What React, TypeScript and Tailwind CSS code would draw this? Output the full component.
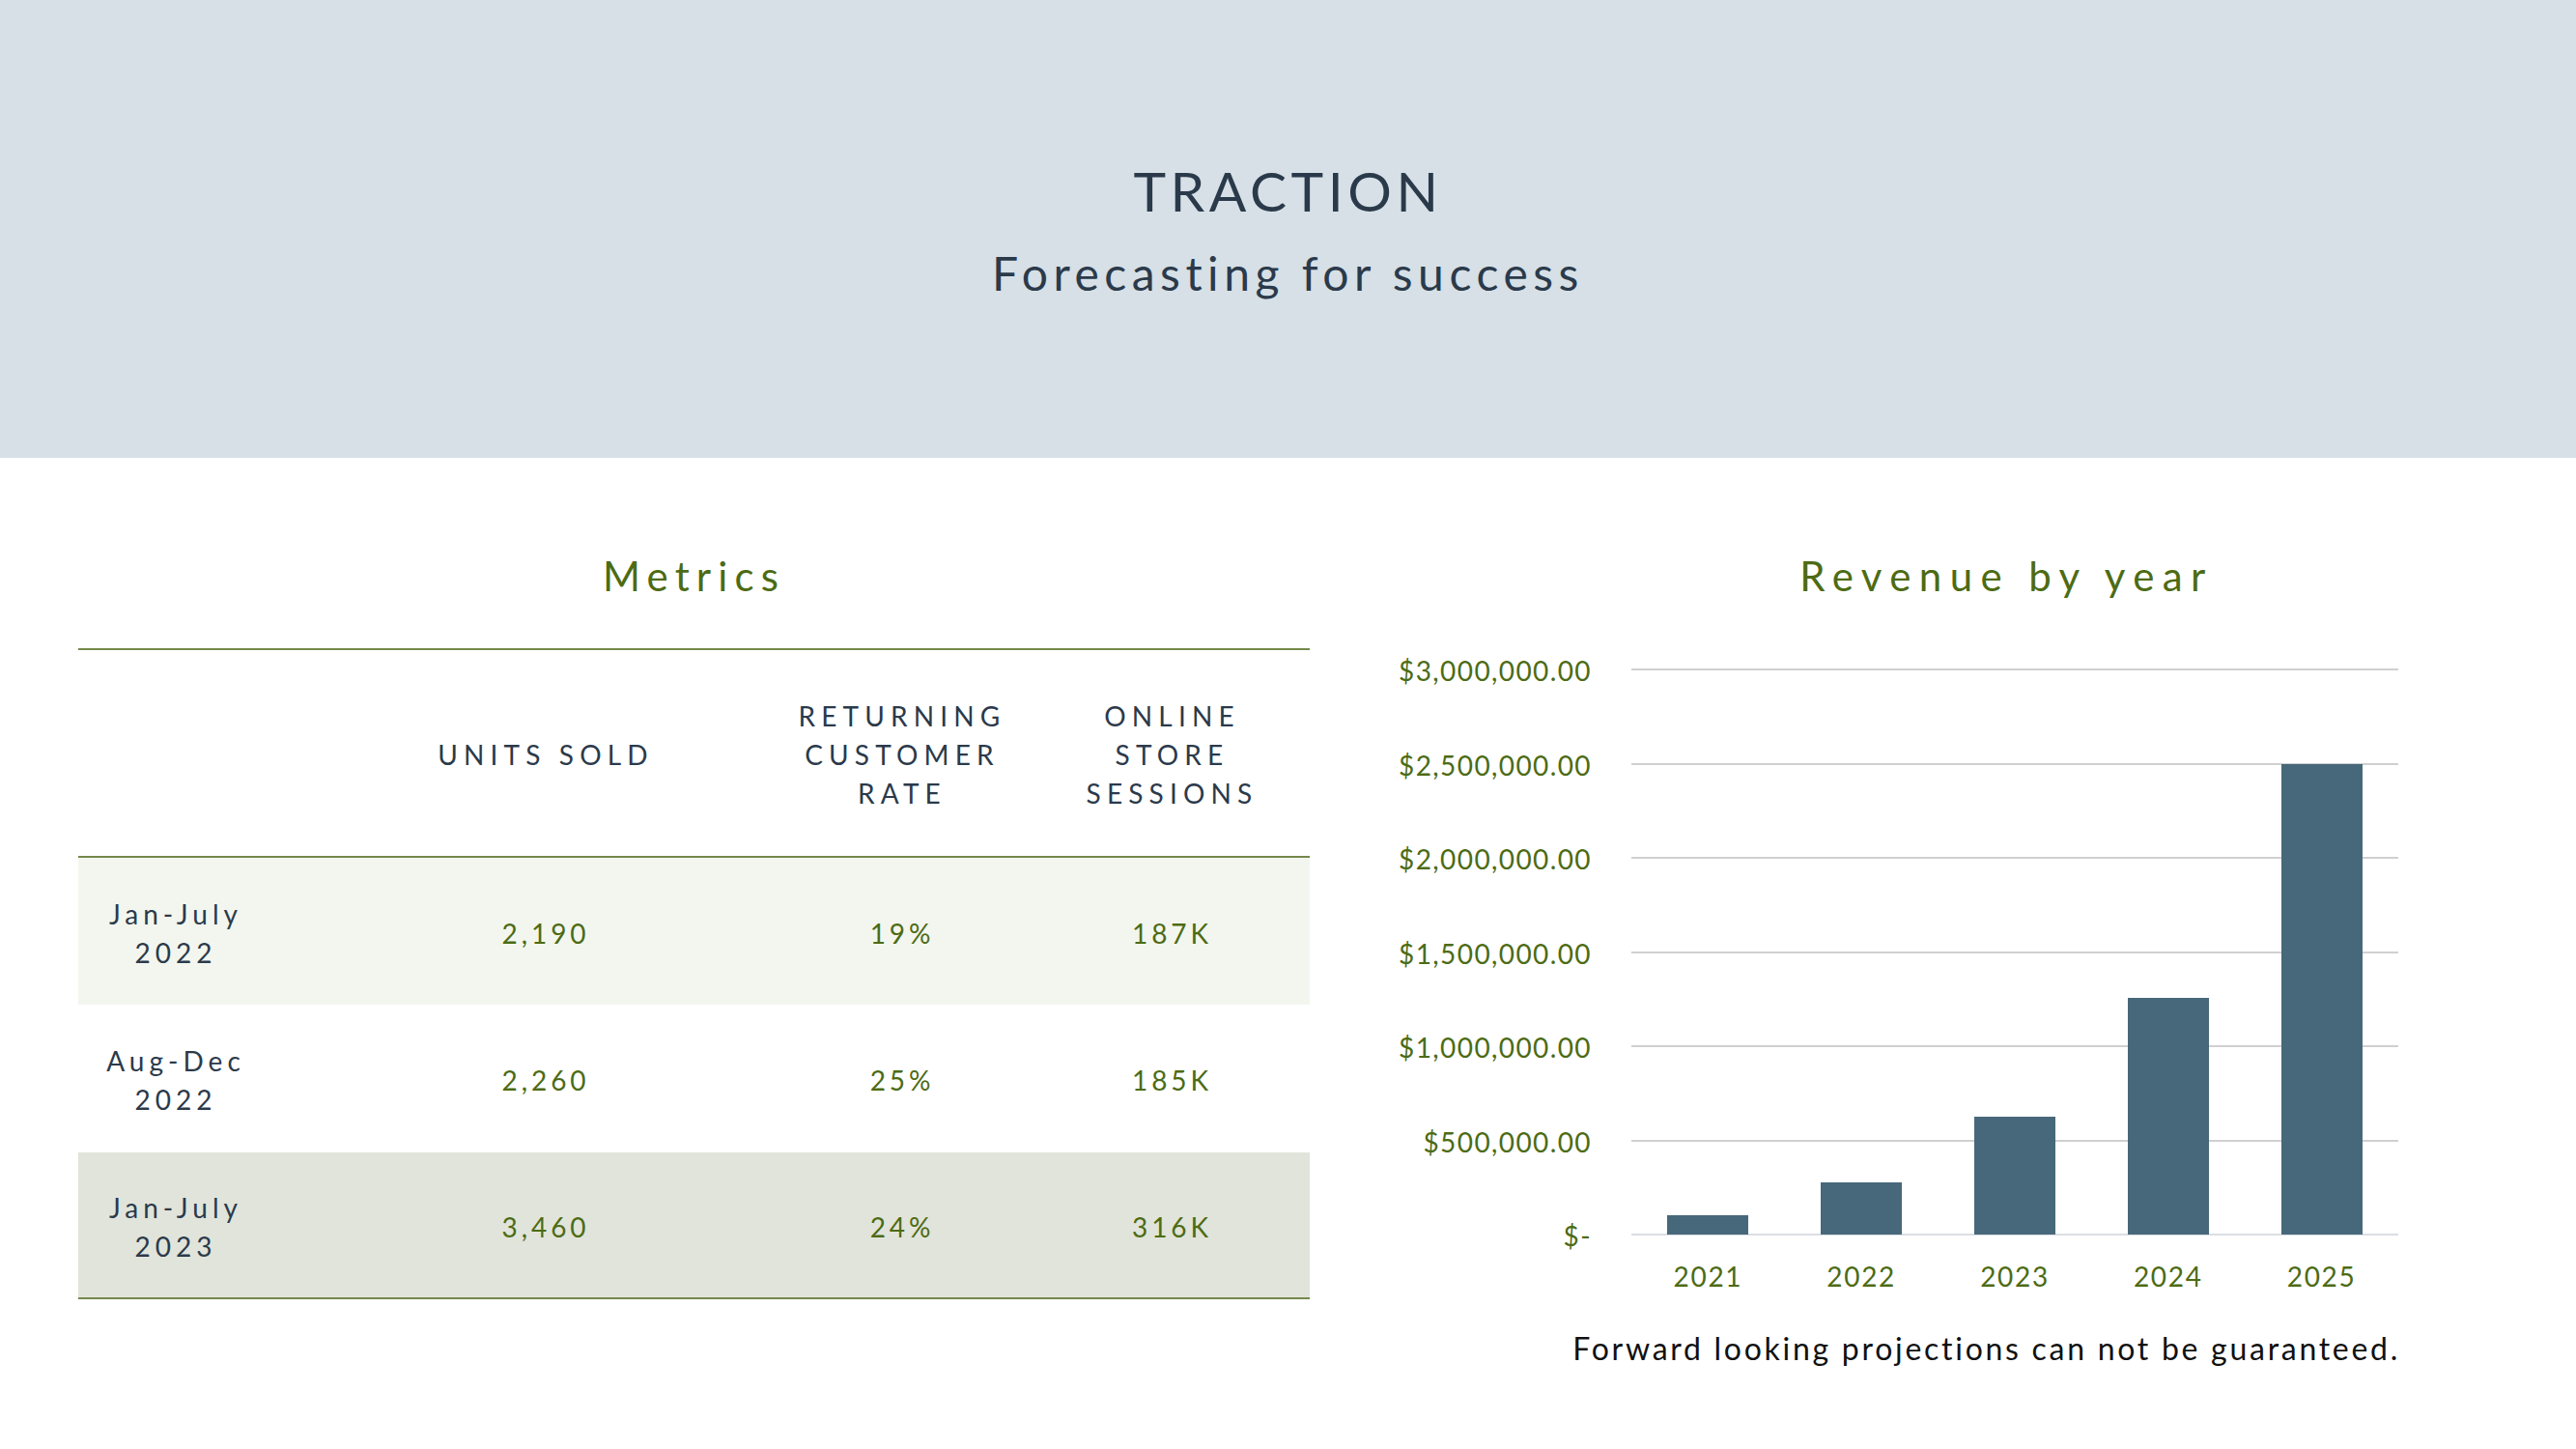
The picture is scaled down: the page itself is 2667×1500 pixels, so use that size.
import React from "react";

const rows = [
  { label: ["Jan-July", "2022"], units: "2,190", rate: "19%", sessions: "187K", bg: "bg-[#f3f6ee]", h: "h-[152px]" },
  { label: ["Aug-Dec", "2022"], units: "2,260", rate: "25%", sessions: "185K", bg: "bg-white", h: "h-[153px]" },
  { label: ["Jan-July", "2023"], units: "3,460", rate: "24%", sessions: "316K", bg: "bg-[#e1e4da]", h: "h-[152px]" },
];

const years = [
  { y: "2021", v: 100000 },
  { y: "2022", v: 270000 },
  { y: "2023", v: 620000 },
  { y: "2024", v: 1250000 },
  { y: "2025", v: 2490000 },
];

const ticks = [
  { v: 3000000, t: "$3,000,000.00" },
  { v: 2500000, t: "$2,500,000.00" },
  { v: 2000000, t: "$2,000,000.00" },
  { v: 1500000, t: "$1,500,000.00" },
  { v: 1000000, t: "$1,000,000.00" },
  { v: 500000, t: "$500,000.00" },
  { v: 0, t: "$-" },
];

const PLOT_H = 585;
const MAX = 3000000;
const yOf = (v: number) => PLOT_H - (v / MAX) * PLOT_H;

export default function App() {
  return (
    <div className="w-[2667px] h-[1500px] bg-white font-['Lato','Open_Sans',sans-serif] overflow-hidden">
      <header className="h-[474px] bg-[#d6e0e6] flex flex-col items-center pt-[169px]">
        <h1 className="text-[57px] leading-none tracking-[0.08em] text-[#2b3a4b] font-normal">TRACTION</h1>
        <p className="mt-[33px] text-[48px] leading-none tracking-[0.115em] text-[#2b3a4b]">Forecasting for success</p>
      </header>

      <div className="flex pt-[99px]">
        {/* Metrics table */}
        <section className="ml-[81px] w-[1275px]">
          <h2 className="pt-[2px] text-center text-[42px] leading-none tracking-[0.17em] text-[#4d6b14]">Metrics</h2>
          <div className="mt-[54px] border-t-2 border-[#76894a]">
            <div className="flex h-[215px] pt-[2px] border-b-2 border-[#76894a] text-[28px] leading-[40px] tracking-[0.22em] text-[#2b3a4b] whitespace-nowrap">
              <div className="w-[202px]" />
              <div className="w-[564px] flex items-center justify-center text-center">UNITS SOLD</div>
              <div className="w-[174px] flex items-center justify-center text-center">
                RETURNING
                <br />
                CUSTOMER
                <br />
                RATE
              </div>
              <div className="flex-1 pl-[50px] flex items-center justify-center text-center">
                ONLINE
                <br />
                STORE
                <br />
                SESSIONS
              </div>
            </div>
            {rows.map((r, i) => (
              <div
                key={i}
                className={`flex ${r.h} pt-[3px] ${r.bg} ${i === rows.length - 1 ? "border-b-2 border-[#76894a]" : ""} text-[28px] leading-[40px] whitespace-nowrap`}
              >
                <div className="w-[202px] flex items-center justify-center text-center text-[#2b3a4b] tracking-[0.18em]">
                  {r.label[0]}
                  <br />
                  {r.label[1]}
                </div>
                <div className="w-[564px] flex items-center justify-center text-[#4d6b14] tracking-[0.14em]">{r.units}</div>
                <div className="w-[174px] flex items-center justify-center text-[#4d6b14] tracking-[0.14em]">{r.rate}</div>
                <div className="flex-1 pl-[50px] flex items-center justify-center text-[#4d6b14] tracking-[0.14em]">{r.sessions}</div>
              </div>
            ))}
          </div>
        </section>

        {/* Revenue chart */}
        <section className="ml-[96px] w-[1033px]">
          <h2 className="pt-[2px] pl-[218px] text-center text-[42px] leading-none tracking-[0.2em] text-[#4d6b14]">Revenue by year</h2>
          <div className="mt-[75px] flex h-[586px]">
            <div className="relative w-[196px] h-full">
              {ticks.map((t) => (
                <div
                  key={t.t}
                  className="absolute right-0 -translate-y-1/2 text-[28px] leading-none text-[#4d6b14] tracking-[0.05em] whitespace-nowrap"
                  style={{ top: yOf(t.v) + 2 }}
                >
                  {t.t}
                </div>
              ))}
            </div>
            <div className="relative ml-[41px] w-[794px] h-full">
              {ticks.map((t) => (
                <div
                  key={t.t}
                  className={`absolute left-0 right-0 h-[2px] ${t.v === 0 ? "bg-[#dadee4]" : "bg-[#d0d0d0]"}`}
                  style={{ top: yOf(t.v) }}
                />
              ))}
              <div className="absolute left-0 right-0 top-0 h-[586px] flex items-end">
                {years.map((y) => (
                  <div key={y.y} className="flex-1 flex justify-center items-end h-full">
                    <div className="w-[84px] bg-[#47687a]" style={{ height: (y.v / MAX) * PLOT_H + 1 }} />
                  </div>
                ))}
              </div>
            </div>
          </div>
          <div className="ml-[237px] w-[794px] mt-[29px] flex">
            {years.map((y) => (
              <div key={y.y} className="flex-1 text-center text-[28px] leading-none tracking-[0.06em] text-[#4d6b14]">
                {y.y}
              </div>
            ))}
          </div>
          <p className="mt-[45px] text-right text-[32px] leading-none tracking-[0.085em] text-[#111111]">
            Forward looking projections can not be guaranteed.
          </p>
        </section>
      </div>
    </div>
  );
}
